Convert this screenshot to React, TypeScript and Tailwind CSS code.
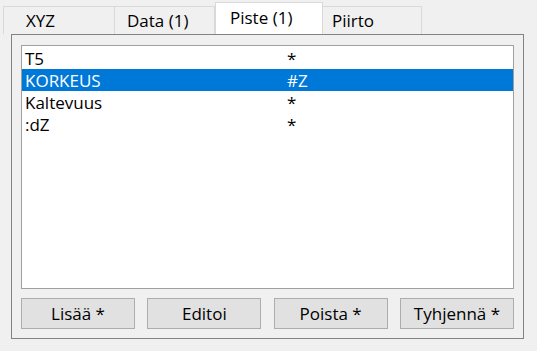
import React from "react";

const rows = [
  { name: "T5", val: "*" },
  { name: "KORKEUS", val: "#Z", sel: true },
  { name: "Kaltevuus", val: "*" },
  { name: ":dZ", val: "*" },
];

export default function App() {
  return (
    <div
      className="w-[537px] h-[351px] bg-[#f0f0f0] text-black text-[17px] leading-none flex flex-col"
      style={{ fontFamily: '"Open Sans", "Noto Sans", sans-serif' }}
    >
      {/* tab strip */}
      <div className="flex items-end h-[34px] pl-[3px]">
        <div className="w-[112px] h-[28px] border border-b-0 border-[#d9d9d9] bg-[#f0f0f0] flex items-center pl-[22px]">XYZ</div>
        <div className="w-[100px] h-[28px] border border-b-0 border-l-0 border-[#d9d9d9] bg-[#f0f0f0] flex items-center pl-[12px]">Data (1)</div>
        <div className="w-[108px] h-[32px] border border-b-0 border-[#d9d9d9] bg-white flex items-center pl-[14px] pb-[3px]">Piste (1)</div>
        <div className="w-[99px] h-[28px] border border-b-0 border-l-0 border-[#d9d9d9] bg-[#f0f0f0] flex items-center pl-[9px]">Piirto</div>
      </div>
      {/* panel */}
      <div className="ml-[11px] w-[513px] h-[305px] border border-[#828282] flex flex-col px-[9px] pt-[10px]">
        <div className="h-[244px] bg-white border border-[#a0a0a0] flex flex-col pt-px">
          {rows.map((r) => (
            <div
              key={r.name}
              className={`flex items-center h-[22px] pl-[3px] ${r.sel ? "bg-[#0078d7] text-white" : ""}`}
            >
              <span className="w-[262px]">{r.name}</span>
              <span>{r.val}</span>
            </div>
          ))}
        </div>
        <div className="flex justify-between mt-[9px]">
          {["Lisää *", "Editoi", "Poista *", "Tyhjennä *"].map((b) => (
            <div
              key={b}
              className="w-[114px] h-[31px] bg-[#e1e1e1] border border-[#adadad] flex items-center justify-center"
            >
              {b}
            </div>
          ))}
        </div>
      </div>
    </div>
  );
}
